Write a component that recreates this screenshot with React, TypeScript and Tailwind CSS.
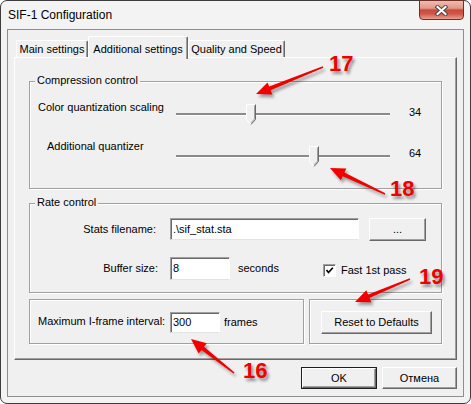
import React from 'react';

type Pt = [number, number];

// tapered annotation arrow, tail -> tip
function arrowPoints(tail: Pt, tip: Pt) {
  const [x1, y1] = tail;
  const [x2, y2] = tip;
  const len = Math.hypot(x2 - x1, y2 - y1);
  const ux = (x2 - x1) / len;
  const uy = (y2 - y1) / len;
  const px = -uy;
  const py = ux;
  const hl = 15;
  const bx = x2 - ux * hl;
  const by = y2 - uy * hl;
  const pts: Pt[] = [
    [x1 + px * 0.8, y1 + py * 0.8],
    [bx + px * 2, by + py * 2],
    [bx + px * 6.5, by + py * 6.5],
    [x2, y2],
    [bx - px * 6.5, by - py * 6.5],
    [bx - px * 2, by - py * 2],
    [x1 - px * 0.8, y1 - py * 0.8],
  ];
  return pts.map(p => `${p[0].toFixed(1)},${p[1].toFixed(1)}`).join(' ');
}

const arrows: { tail: Pt; tip: Pt }[] = [
  { tail: [323, 67], tip: [256, 94] },
  { tail: [385, 194], tip: [330, 168] },
  { tail: [410, 279], tip: [355, 302] },
  { tail: [234, 373], tip: [191, 339] },
];

const marks = [
  { n: '17', left: 329, top: 53 },
  { n: '18', left: 390, top: 178 },
  { n: '19', left: 419, top: 266 },
  { n: '16', left: 243, top: 360 },
];

function Group({ title, className = '', children }: { title?: string; className?: string; children?: React.ReactNode }) {
  return (
    <div className={`relative border border-[#a0a0a0] shadow-[inset_1px_1px_0_#fff,1px_1px_0_#fff] ${className}`}>
      {title && (
        <span className="absolute left-[5px] -top-[8px] bg-[#f0f0f0] px-[2px] text-[11px] leading-[13px]">{title}</span>
      )}
      {children}
    </div>
  );
}

function Btn({ children, className = '', isDefault = false }: { children: React.ReactNode; className?: string; isDefault?: boolean }) {
  const face = (
    <div className="flex h-full w-full items-center justify-center border border-t-white border-l-white border-r-[#696969] border-b-[#696969] bg-[#f0f0f0] text-[11px] shadow-[inset_-1px_-1px_0_#a0a0a0]">
      {children}
    </div>
  );
  if (isDefault) return <div className={`border border-[#1e1e1e] ${className}`}>{face}</div>;
  return <div className={className}>{face}</div>;
}

function Field({ value, className = '' }: { value: string; className?: string }) {
  return (
    <div className={`flex items-center border border-t-[#a0a0a0] border-l-[#a0a0a0] border-r-white border-b-[#e3e3e3] bg-white pl-[2px] text-[11px] shadow-[inset_1px_1px_0_#696969] ${className}`}>
      {value}
    </div>
  );
}

function Slider({ value }: { value: number }) {
  return (
    <div className="relative h-[22px] w-[214px]">
      <div className="absolute left-0 right-0 top-[9px] h-[2px] bg-[#8a8a8a] shadow-[0_1px_0_#fff]" />
      <svg className="absolute top-0" style={{ left: Math.round(value * 2.1) - 1 }} width="11" height="22" viewBox="0 0 11 22">
        <polygon points="0.5,0.5 9.5,0.5 9.5,15.5 5,20.5 0.5,15.5" fill="#f0f0f0" />
        <path d="M5 20.5 L0.5 15.5 V0.5 H9.5" fill="none" stroke="#ffffff" />
        <path d="M9.5 0.5 V15.5 L5 20.5" fill="none" stroke="#696969" />
        <path d="M8.5 1.5 V15 L5 18.8" fill="none" stroke="#a0a0a0" />
      </svg>
    </div>
  );
}

export default function App() {
  return (
    <div className="relative h-[404px] w-[471px] overflow-hidden bg-white font-['Liberation_Sans',Arial,sans-serif] text-black">
      <div className="flex h-full w-full flex-col rounded-[7px] border border-[#3d3d3d] bg-[#f3f3f3]">
        {/* Title bar */}
        <div className="flex h-[28px] shrink-0 items-start">
          <span className="pl-[7px] pt-[7px] text-[12px] leading-[14px] [text-shadow:0_0_6px_#fff]">SIF-1 Configuration</span>
          <div className="-mt-px ml-auto mr-[6px] flex h-[20px] w-[45px] items-center justify-center rounded-b-[4px] border border-[#6e2f27] bg-[linear-gradient(#eebcb0_0%,#e39888_40%,#c94a3c_50%,#d0584a_72%,#e9a08e_100%)]">
            <svg width="15" height="11" viewBox="0 0 15 11">
              <path d="M3.5 2 L11.5 9 M11.5 2 L3.5 9" stroke="#4a4a4a" strokeWidth="4" strokeLinecap="square" />
              <path d="M3.5 2 L11.5 9 M11.5 2 L3.5 9" stroke="#ffffff" strokeWidth="2" strokeLinecap="square" />
            </svg>
          </div>
        </div>

        {/* Client area */}
        <div className="mx-[6px] flex h-[368px] flex-col border border-[#8f8f8f] bg-[#f0f0f0] px-[6px] pt-[6px]">
          {/* Tabs */}
          <div className="flex h-[21px] items-end pl-[2px] text-[11px]">
            <div className="flex h-[17px] w-[72px] items-center justify-center rounded-t-[2px] border-l border-t border-r border-l-white border-t-white border-r-[#696969] shadow-[inset_-1px_0_0_#a0a0a0]">
              Main settings
            </div>
            <div className="relative z-10 -mb-[2px] flex h-[23px] w-[100px] items-start justify-center rounded-t-[2px] border-l border-t border-r border-l-white border-t-white border-r-[#696969] bg-[#f0f0f0] pt-[4px] shadow-[inset_-1px_0_0_#a0a0a0]">
              Additional settings
            </div>
            <div className="flex h-[17px] w-[97px] items-center justify-center rounded-t-[2px] border-l border-t border-r border-l-white border-t-white border-r-[#696969] shadow-[inset_-1px_0_0_#a0a0a0]">
              Quality and Speed
            </div>
          </div>

          {/* Tab panel */}
          <div className="flex h-[303px] w-[443px] flex-col border border-t-white border-l-white border-r-[#696969] border-b-[#696969] px-[14px] text-[11px] shadow-[inset_-1px_-1px_0_#a0a0a0]">
            <Group title="Compression control" className="mt-[23px] h-[108px]">
              <div className="flex h-[44px] items-start pl-[8px]">
                <span className="mt-[19px] w-[138px] leading-[13px]">Color quantization scaling</span>
                <div className="mt-[22px]">
                  <Slider value={34} />
                </div>
                <span className="ml-[19px] mt-[24px] leading-[13px]">34</span>
              </div>
              <div className="flex items-start pl-[17px]">
                <span className="mt-[14px] w-[129px] leading-[13px]">Additional quantizer</span>
                <div className="mt-[20px]">
                  <Slider value={64} />
                </div>
                <span className="ml-[19px] mt-[21px] leading-[13px]">64</span>
              </div>
            </Group>

            <Group title="Rate control" className="mt-[14px] h-[90px]">
              <div className="mt-[14px] flex h-[22px] items-center">
                <span className="w-[126px] text-right">Stats filename:</span>
                <Field value=".\sif_stat.sta" className="ml-[14px] h-[22px] w-[189px]" />
                <Btn className="ml-[10px] h-[23px] w-[57px]">...</Btn>
              </div>
              <div className="mt-[17px] flex h-[23px] items-center">
                <span className="w-[128px] text-right">Buffer size:</span>
                <Field value="8" className="ml-[12px] h-[23px] w-[60px]" />
                <span className="ml-[8px] w-[85px]">seconds</span>
                <div className="mt-[4px] flex h-[13px] w-[13px] items-center justify-center border border-t-[#a0a0a0] border-l-[#a0a0a0] border-r-white border-b-white bg-white shadow-[inset_1px_1px_0_#696969]">
                  <svg width="9" height="9" viewBox="0 0 9 9">
                    <path d="M1.5 4 L3.5 6.5 L7.8 1.8" stroke="#000" strokeWidth="1.7" fill="none" />
                  </svg>
                </div>
                <span className="ml-[5px] mt-[4px]">Fast 1st pass</span>
              </div>
            </Group>

            <div className="mt-[6px] flex h-[45px] gap-[5px]">
              <Group className="flex h-full w-[275px] items-center pl-[8px]">
                <span className="w-[132px]">Maximum I-frame interval:</span>
                <Field value="300" className="mt-[2px] h-[21px] w-[50px]" />
                <span className="ml-[4px] mt-[2px]">frames</span>
              </Group>
              <Group className="h-full w-[133px] pl-[11px] pt-[11px]">
                <Btn className="h-[23px] w-[111px]">Reset to Defaults</Btn>
              </Group>
            </div>
          </div>

          {/* Dialog buttons */}
          <div className="mt-[7px] flex justify-end gap-[5px]">
            <Btn isDefault className="h-[22px] w-[76px]">OK</Btn>
            <Btn className="h-[22px] w-[75px]">Отмена</Btn>
          </div>
        </div>
      </div>

      {/* Red annotations */}
      <svg className="pointer-events-none absolute inset-0" width="471" height="404" viewBox="0 0 471 404">
        <defs>
          <filter id="sh" x="-20%" y="-20%" width="140%" height="140%">
            <feGaussianBlur stdDeviation="1.5" />
          </filter>
        </defs>
        {arrows.map((a, i) => (
          <g key={i}>
            <polygon points={arrowPoints(a.tail, a.tip)} fill="#000" opacity="0.35" transform="translate(2 3)" filter="url(#sh)" />
            <polygon points={arrowPoints(a.tail, a.tip)} fill="#f20000" />
          </g>
        ))}
      </svg>
      {marks.map(m => (
        <span
          key={m.n}
          className="pointer-events-none absolute text-[22px] font-bold leading-none text-[#f00000] [text-shadow:2px_3px_3px_rgba(0,0,0,0.4)]"
          style={{ left: m.left, top: m.top }}
        >
          {m.n}
        </span>
      ))}
    </div>
  );
}
